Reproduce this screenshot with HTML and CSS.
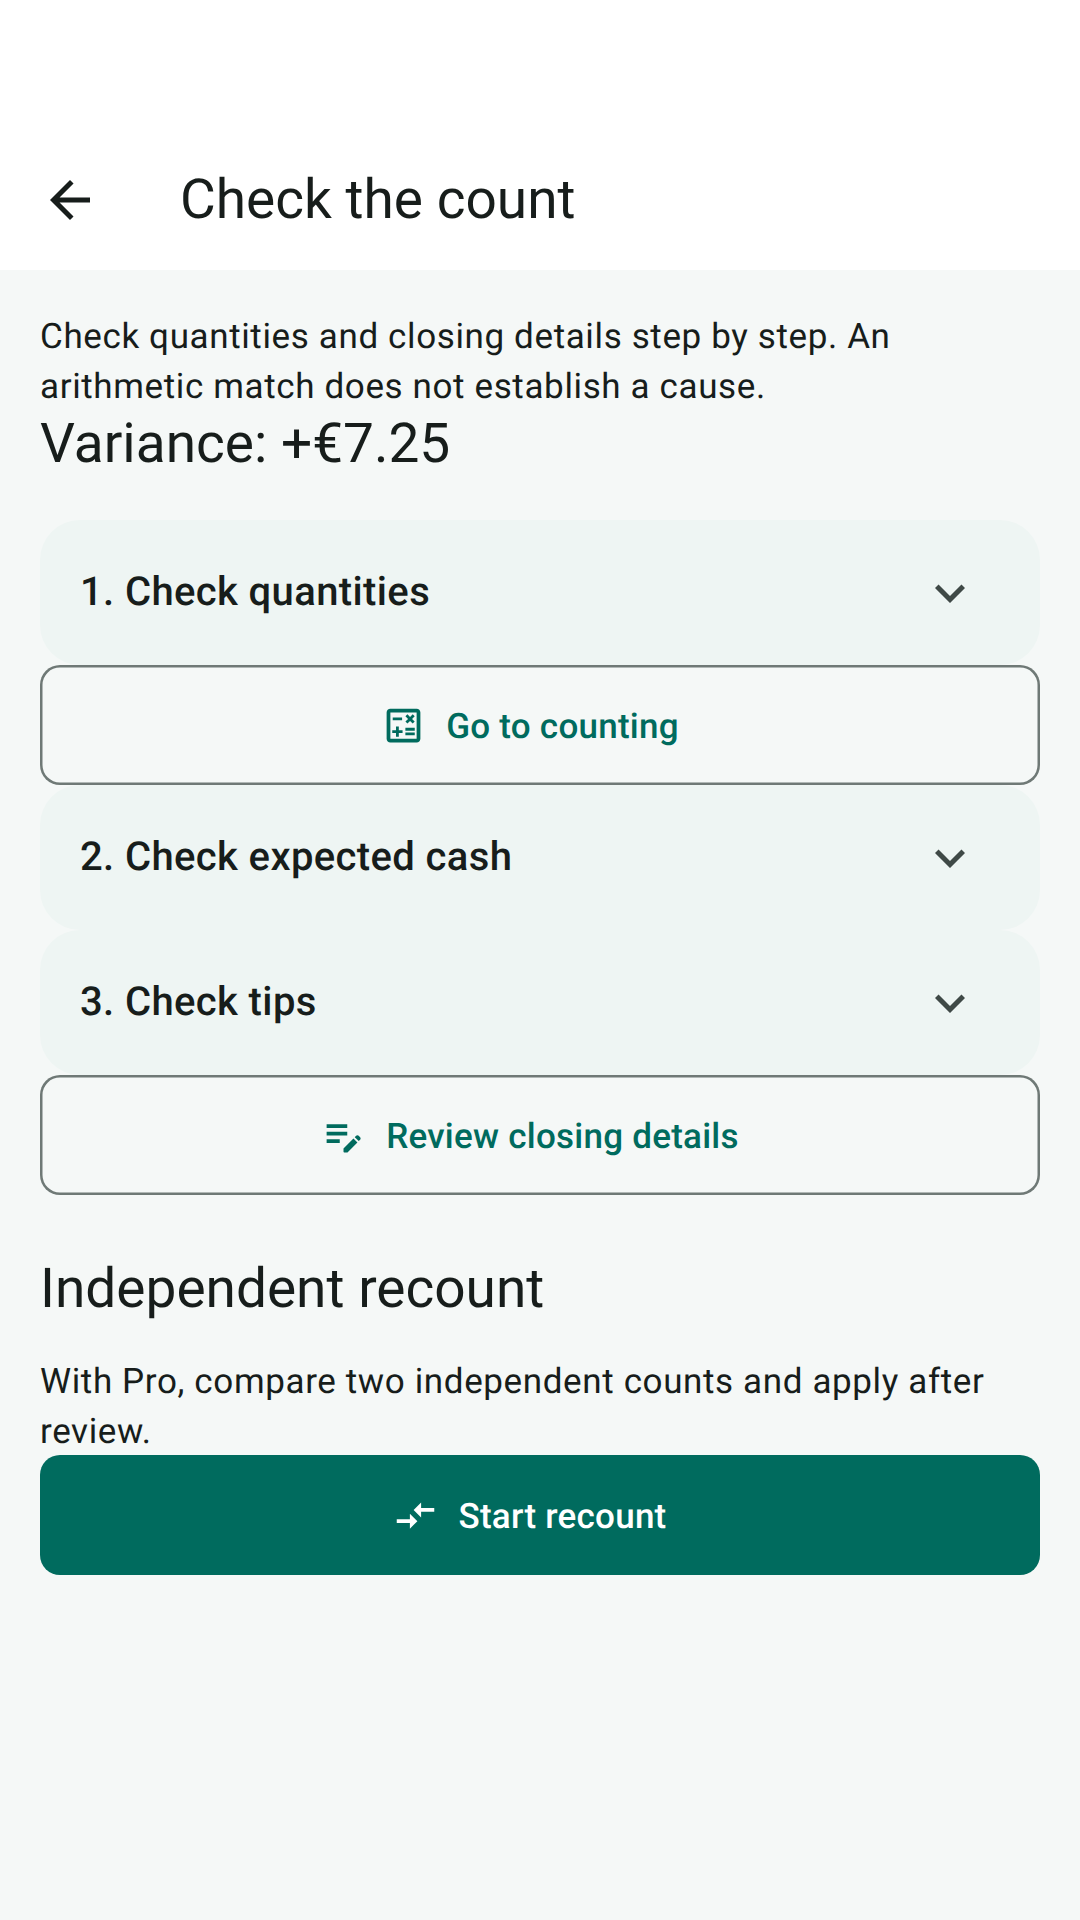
FILE: index.html
```html
<!DOCTYPE html>
<html lang="en">
<head>
    <meta charset="UTF-8">
    <meta name="viewport" content="width=device-width, initial-scale=1.0">
    <title>Check the count</title>
    <link rel="stylesheet" href="styles.css">
</head>
<body>

    <!-- Top app bar -->
    <header class="app-bar">
        <button class="nav-button" aria-label="Back">
            <svg class="nav-icon" viewBox="0 0 24 24"><path d="M20 11H7.83l5.59-5.59L12 4l-8 8 8 8 1.41-1.41L7.83 13H20v-2z"/></svg>
        </button>
        <h1 class="app-title">Check the count</h1>
    </header>

    <main class="content">
        <p class="body-text">Check quantities and closing details step by step. An arithmetic match does not establish a cause.</p>
        <h2 class="title-text variance">Variance: +€7.25</h2>

        <div class="steps">
            <div class="step-row">
                <span class="step-label">1. Check quantities</span>
                <svg class="chevron" viewBox="0 0 24 24"><path d="M16.59 8.59 12 13.17 7.41 8.59 6 10l6 6 6-6z"/></svg>
            </div>
            <button class="btn btn-outline">
                <svg class="btn-icon" viewBox="0 0 24 24"><path d="M19 3H5c-1.1 0-2 .9-2 2v14c0 1.1.9 2 2 2h14c1.1 0 2-.9 2-2V5c0-1.1-.9-2-2-2zm0 16H5V5h14v14z"/><path d="M6.25 7.72h5v1.5h-5zM13 15.75h5v1.5h-5zM13 13.25h5v1.5h-5zM8 18h1.5v-2h2v-1.5h-2v-2H8v2H6V16h2zM14.09 10.95l1.41-1.41 1.41 1.41 1.06-1.06-1.41-1.42 1.41-1.41L16.91 6 15.5 7.41 14.09 6l-1.06 1.06 1.41 1.41-1.41 1.42z"/></svg>
                <span class="btn-label">Go to counting</span>
            </button>
            <div class="step-row">
                <span class="step-label">2. Check expected cash</span>
                <svg class="chevron" viewBox="0 0 24 24"><path d="M16.59 8.59 12 13.17 7.41 8.59 6 10l6 6 6-6z"/></svg>
            </div>
            <div class="step-row">
                <span class="step-label">3. Check tips</span>
                <svg class="chevron" viewBox="0 0 24 24"><path d="M16.59 8.59 12 13.17 7.41 8.59 6 10l6 6 6-6z"/></svg>
            </div>
            <button class="btn btn-outline">
                <svg class="btn-icon" viewBox="0 0 24 24"><path d="M3 10h11v2H3v-2zm0-2h11V6H3v2zm0 8h7v-2H3v2zm15.01-3.13.71-.71c.39-.39 1.02-.39 1.41 0l.71.71c.39.39.39 1.02 0 1.41l-.71.71-2.12-2.12zM17.3 13.58l-5.3 5.3v1.62c0 .33.27.6.6.6h1.52l5.3-5.4-2.12-2.12z"/></svg>
                <span class="btn-label">Review closing details</span>
            </button>
        </div>

        <!-- Pro recount -->
        <h2 class="title-text recount-title">Independent recount</h2>
        <p class="body-text">With Pro, compare two independent counts and apply after review.</p>
        <button class="btn btn-filled">
            <svg class="btn-icon" viewBox="0 0 24 24"><path d="M9.01 14H2v2h7.01v3L13 15l-3.99-4v3zm5.98-1v-3H22V8h-7.01V5L11 9l3.99 4z"/></svg>
            <span class="btn-label">Start recount</span>
        </button>
    </main>

</body>
</html>
```

FILE: styles.css
```css
body {
    margin: 0;
    min-height: 1920px;
    background-color: #f5f8f7;
    color: #171d1b;
    font-family: Roboto, sans-serif;
    text-rendering: geometricPrecision;
}

.app-bar {
    display: flex;
    align-items: center;
    height: 141px;
    padding: 129px 0 0 10px;
    background-color: #ffffff;
}

.nav-button {
    display: flex;
    align-items: center;
    justify-content: center;
    width: 120px;
    height: 120px;
    margin-right: 50px;
    padding: 0;
    border: none;
    background: none;
}

.nav-icon {
    width: 60px;
    height: 60px;
    fill: #171d1b;
}

.app-title {
    margin: 0;
    font-size: 55px;
    font-weight: 400;
    line-height: 70px;
}

.content {
    padding: 42px 40px 40px;
}

.body-text {
    margin: 0;
    font-size: 35px;
    line-height: 50px;
    letter-spacing: 0.625px;
}

.title-text {
    margin: 0;
    font-size: 55px;
    font-weight: 400;
    line-height: 70px;
}

.variance {
    margin: -3px 0 41px;
}

.recount-title {
    margin: 59px 0 33px;
}

.steps {
    display: flex;
    flex-direction: column;
}

.step-row {
    display: flex;
    align-items: center;
    justify-content: space-between;
    height: 145px;
    padding: 0 60px 0 40px;
    border-radius: 40px;
    background-color: #eef5f3;
}

.step-label {
    margin-top: -2px;
    font-size: 40px;
    font-weight: 500;
    letter-spacing: 0.375px;
}

.chevron {
    width: 60px;
    height: 60px;
    fill: #3f4946;
}

.btn {
    display: flex;
    align-items: center;
    justify-content: center;
    gap: 20px;
    box-sizing: border-box;
    width: 100%;
    height: 120px;
    padding: 0 20px 0 0;
    border: none;
    border-radius: 20px;
    font-family: Roboto, sans-serif;
    font-size: 35px;
    font-weight: 500;
    letter-spacing: 0.25px;
    text-rendering: geometricPrecision;
}

.btn-label {
    margin-top: 2px;
}

.btn-icon {
    width: 45px;
    height: 45px;
    fill: currentColor;
}

.btn-outline {
    box-shadow: inset 0 0 0 2.5px #6f7976;
    background: none;
    color: #006b5e;
}

.btn-filled {
    margin-top: -2px;
    background-color: #006b5e;
    color: #ffffff;
}
```
